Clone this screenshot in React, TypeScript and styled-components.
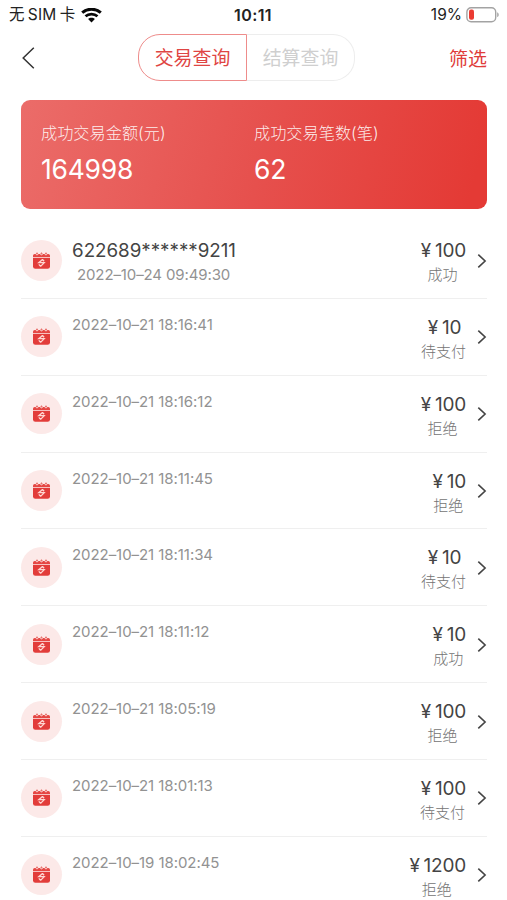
import React from "react";
import styled, { createGlobalStyle } from "styled-components";

const GlobalStyle = createGlobalStyle`
  * { box-sizing: border-box; }
  html, body { margin: 0; background: #fff; }
  body {
    font-family: Inter, "Noto Sans CJK SC", sans-serif;
    color: #444;
    overflow: hidden;
  }
`;

const Screen = styled.main`
  width: 507px;
  height: 900px;
  overflow: hidden;
  background: #fff;
`;

const StatusBar = styled.header`
  display: grid;
  grid-template-columns: 1fr auto 1fr;
  align-items: center;
  height: 30px;
  padding: 0 8px 0 9px;
  font-size: 15.5px;
  line-height: 30px;
  color: #222;
`;

const Carrier = styled.div`
  display: flex;
  align-items: center;
  gap: 6px;
`;

const CarrierName = styled.span`
  word-spacing: -1.4px;
  letter-spacing: 0.2px;
`;

const Clock = styled.span`
  font-weight: 600;
  font-size: 16px;
  letter-spacing: 0.4px;
  margin-left: -1px;
  margin-right: 1px;
`;

const Battery = styled.div`
  display: flex;
  align-items: center;
  justify-content: flex-end;
  gap: 4px;
`;

const NavBar = styled.nav`
  display: grid;
  grid-template-columns: 117px 217px 1fr;
  align-items: center;
  height: 55px;
  padding: 0 20px 0 21px;
`;

const BackButton = styled.button`
  display: flex;
  width: 16px;
  padding: 0;
  border: 0;
  background: none;
`;

const Tabs = styled.div`
  display: flex;
  height: 47px;
`;

const Tab = styled.button<{ $active?: boolean }>`
  flex: 1;
  padding: 3px 0 0;
  font: 400 18.9px/42px Inter, "Noto Sans CJK SC", sans-serif;
  background: #fff;
  color: ${(p) => (p.$active ? "#df4543" : "#cfcfcf")};
  border: 1px solid ${(p) => (p.$active ? "#ee8c8b" : "#ededed")};
  border-radius: ${(p) => (p.$active ? "22px 0 0 22px" : "0 22px 22px 0")};
  border-left-width: ${(p) => (p.$active ? "1px" : "0")};
`;

const FilterButton = styled.button`
  justify-self: end;
  padding: 0;
  border: 0;
  background: none;
  color: #e03c3a;
  font: 400 19px/28px "Noto Sans CJK SC", sans-serif;
`;

const Summary = styled.section`
  display: grid;
  grid-template-columns: 213px 1fr;
  height: 109px;
  margin: 15px 20px 0 21px;
  padding: 22px 20px 0;
  border-radius: 9px;
  background: linear-gradient(105deg, #eb6c69 0%, #e6504d 52%, #e43a35 96%);
  color: #fff;
`;

const SummaryLabel = styled.div`
  font-size: 16.2px;
  line-height: 23px;
  color: rgba(255, 255, 255, 0.9);
  font-weight: 300;
`;

const SummaryValue = styled.div`
  margin-top: 7px;
  font-size: 26.5px;
  line-height: 34px;
  letter-spacing: -0.25px;
`;

const List = styled.ul`
  margin: 13px 20px 0 21px;
  padding: 0;
  list-style: none;
`;

const Row = styled.li`
  display: flex;
  height: 76.85px;
  border-bottom: 1px solid #efefef;
`;

const IconDisc = styled.div`
  display: flex;
  align-items: center;
  justify-content: center;
  width: 41px;
  height: 41px;
  margin-top: 17.5px;
  border-radius: 50%;
  background: #fce9e8;
`;

const Details = styled.div<{ $hasCard: boolean }>`
  flex: 1;
  padding: ${(p) => (p.$hasCard ? "17px" : "14px")} 0 0 10px;
`;

const CardNumber = styled.div`
  font-size: 18.8px;
  line-height: 24px;
  letter-spacing: -0.02px;
`;

const DateTime = styled.div<{ $indented: boolean }>`
  padding-left: ${(p) => (p.$indented ? "5px" : "0")};
  font-size: 15px;
  line-height: 24px;
  letter-spacing: ${(p) => (p.$indented ? "-0.12px" : "-0.06px")};
  color: #929292;
`;

const Outcome = styled.div`
  display: flex;
  flex-direction: column;
  align-items: center;
  padding-top: 17px;
`;

const Amount = styled.div`
  font-size: 19px;
  line-height: 24px;
  letter-spacing: -0.2px;
  word-spacing: -1.3px;
`;

const State = styled.div`
  margin-left: -2px;
  font-size: 15px;
  line-height: 24px;
  font-weight: 300;
  color: #737373;
`;

const ArrowSlot = styled.div`
  display: flex;
  width: 21px;
  padding: 30.5px 0 0 11px;
`;

const WifiIcon = () => (
  <svg width="21" height="15" viewBox="0 0 21 15" fill="none" stroke="#080808">
    <path d="M1.2 4.6C6.4.1 14.6.1 19.8 4.6" strokeWidth="3" />
    <path d="M4.5 8.2c3.3-2.9 8.7-2.9 12 0" strokeWidth="2.8" />
    <path d="M7.1 11c1.8-1.7 5-1.7 6.8 0l-3.4 3.4z" fill="#080808" stroke="none" />
  </svg>
);

const BatteryIcon = () => (
  <svg width="33" height="16" viewBox="0 0 33 16">
    <rect x="0.9" y="0.7" width="28.8" height="14" rx="4.2" fill="#fff" stroke="#a3a3a3" strokeWidth="1.4" />
    <rect x="3" y="2.6" width="5" height="10.2" rx="2" fill="#eb3b32" />
    <path d="M31.2 5.3c2 .7 2 4.1 0 4.8z" fill="#a3a3a3" />
  </svg>
);

const BackIcon = () => (
  <svg width="16" height="24" viewBox="0 0 16 24" fill="none" stroke="#333" strokeWidth="1.5">
    <path d="M12.8 1.8 2.2 12l10.6 10.2" />
  </svg>
);

const CalendarIcon = () => (
  <svg width="19" height="19" viewBox="0 0 19 19">
    <path d="M1 6.2V4.8q0-1.9 1.8-1.9h.7l1.5 1.5 1.6-1.5h1.3l1.6 1.5 1.6-1.5h1.3L14 4.4l1.5-1.5h.7q1.8 0 1.8 1.9v1.4z" fill="#e54744" />
    <path d="M5 1.3 6.2 2.6 5 3.8 3.8 2.6zM9.5 1.3l1.2 1.3-1.2 1.2-1.2-1.2zM14 1.3l1.2 1.3L14 3.8l-1.2-1.2z" fill="#e8706c" />
    <path d="M1 6.9h17v8.5q0 2.4-2.4 2.4H3.4Q1 17.8 1 15.4z" fill="#e23c3a" />
    <path d="m10.5 8.4-3.7 3.3h5.4l-3.6 3.7M6.8 13.4l1.8 2M10.5 8.5l1.6 1.8" fill="none" stroke="#ffd6d2" strokeWidth="1.3" />
  </svg>
);

const ChevronIcon = () => (
  <svg width="10" height="16" viewBox="0 0 10 16" fill="none" stroke="#444" strokeWidth="1.6">
    <path d="m1.3 1.6 6.8 6.4-6.8 6.4" />
  </svg>
);

type Transaction = { card?: string; time: string; amount: string; state: string };

const transactions: Transaction[] = [
  { card: "622689******9211", time: "2022–10–24 09:49:30", amount: "100", state: "成功" },
  { time: "2022–10–21 18:16:41", amount: "10", state: "待支付" },
  { time: "2022–10–21 18:16:12", amount: "100", state: "拒绝" },
  { time: "2022–10–21 18:11:45", amount: "10", state: "拒绝" },
  { time: "2022–10–21 18:11:34", amount: "10", state: "待支付" },
  { time: "2022–10–21 18:11:12", amount: "10", state: "成功" },
  { time: "2022–10–21 18:05:19", amount: "100", state: "拒绝" },
  { time: "2022–10–21 18:01:13", amount: "100", state: "待支付" },
  { time: "2022–10–19 18:02:45", amount: "1200", state: "拒绝" },
];

export default function App() {
  return (
    <Screen>
      <GlobalStyle />
      <StatusBar>
        <Carrier>
          <CarrierName>无 SIM 卡</CarrierName>
          <WifiIcon />
        </Carrier>
        <Clock>10:11</Clock>
        <Battery>
          <span>19%</span>
          <BatteryIcon />
        </Battery>
      </StatusBar>
      <NavBar>
        <BackButton aria-label="返回"><BackIcon /></BackButton>
        <Tabs>
          <Tab $active>交易查询</Tab>
          <Tab>结算查询</Tab>
        </Tabs>
        <FilterButton>筛选</FilterButton>
      </NavBar>
      <Summary>
        <div>
          <SummaryLabel>成功交易金额(元)</SummaryLabel>
          <SummaryValue>164998</SummaryValue>
        </div>
        <div>
          <SummaryLabel>成功交易笔数(笔)</SummaryLabel>
          <SummaryValue>62</SummaryValue>
        </div>
      </Summary>
      <List>
        {transactions.map((t) => (
          <Row key={t.time}>
            <IconDisc><CalendarIcon /></IconDisc>
            <Details $hasCard={Boolean(t.card)}>
              {t.card && <CardNumber>{t.card}</CardNumber>}
              <DateTime $indented={Boolean(t.card)}>{t.time}</DateTime>
            </Details>
            <Outcome>
              <Amount>¥ {t.amount}</Amount>
              <State>{t.state}</State>
            </Outcome>
            <ArrowSlot><ChevronIcon /></ArrowSlot>
          </Row>
        ))}
      </List>
    </Screen>
  );
}
